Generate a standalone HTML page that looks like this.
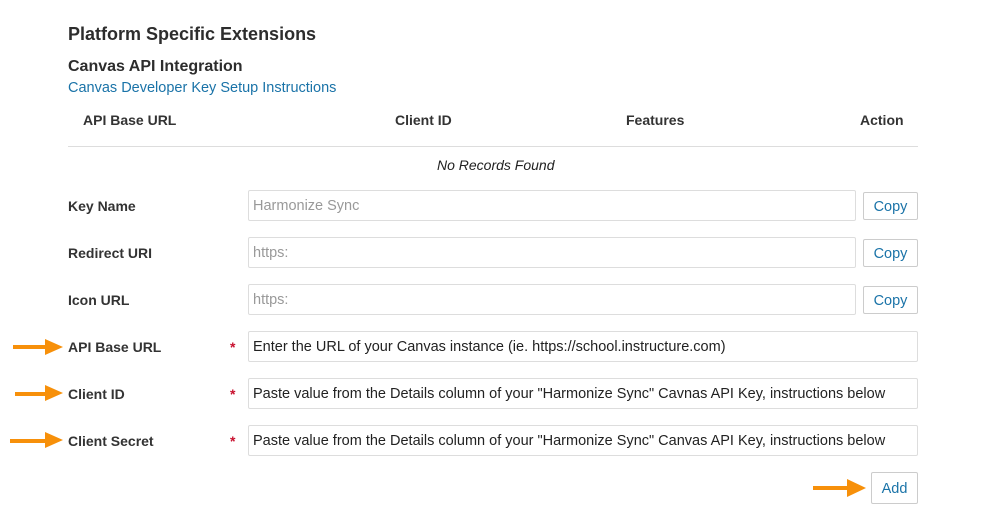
<!DOCTYPE html>
<html><head><style>
body{margin:0;width:993px;height:530px;background:#fff;font-family:"Liberation Sans",sans-serif;color:#222;position:relative;overflow:hidden}
.a{position:absolute;white-space:nowrap}
.lbl{font-size:14px;font-weight:bold;color:#333}
.inp{position:absolute;left:248px;border:1px solid #ddd;border-radius:2px;font-size:14.5px;line-height:31px;padding-left:4px;box-sizing:border-box;height:31px;white-space:nowrap;overflow:hidden}
.btn{position:absolute;border:1px solid #ccc;border-radius:2px;color:#1a73a8;font-size:14.5px;text-align:center;box-sizing:border-box}
.star{position:absolute;left:230px;color:#c8102e;font-size:14px;font-weight:bold}
</style></head><body>
<div class="a" style="left:68px;top:24px;font-size:18px;font-weight:bold;color:#2d2d2d">Platform Specific Extensions</div>
<div class="a" style="left:68px;top:58px;font-size:16px;font-weight:bold;color:#2d2d2d">Canvas API Integration</div>
<div class="a" style="left:68px;top:80px;font-size:14.5px;color:#1a73a8">Canvas Developer Key Setup Instructions</div>
<div class="a lbl" style="left:83px;top:112px">API Base URL</div>
<div class="a lbl" style="left:395px;top:112px">Client ID</div>
<div class="a lbl" style="left:626px;top:112px">Features</div>
<div class="a lbl" style="left:860px;top:112px">Action</div>
<div class="a" style="left:68px;top:146px;width:850px;height:1px;background:#ddd"></div>
<div class="a" style="left:437px;top:157px;font-size:14px;font-style:italic">No Records Found</div>

<div class="a lbl" style="left:68px;top:198px">Key Name</div>
<div class="inp" style="top:190px;width:608px;color:#999">Harmonize Sync</div>
<div class="btn" style="left:863px;top:192px;width:55px;height:28px;line-height:28px">Copy</div>
<div class="a lbl" style="left:68px;top:245px">Redirect URI</div>
<div class="inp" style="top:237px;width:608px;color:#999">https:</div>
<div class="btn" style="left:863px;top:239px;width:55px;height:28px;line-height:28px">Copy</div>
<div class="a lbl" style="left:68px;top:292px">Icon URL</div>
<div class="inp" style="top:284px;width:608px;color:#999">https:</div>
<div class="btn" style="left:863px;top:286px;width:55px;height:28px;line-height:28px">Copy</div>

<div class="a lbl" style="left:68px;top:339px">API Base URL</div>
<div class="star" style="top:339px">*</div>
<div class="inp" style="top:331px;width:670px;color:#222">Enter the URL of your Canvas instance (ie. https://school.instructure.com)</div>
<div class="a lbl" style="left:68px;top:386px">Client ID</div>
<div class="star" style="top:386px">*</div>
<div class="inp" style="top:378px;width:670px;color:#222">Paste value from the Details column of your "Harmonize Sync" Cavnas API Key, instructions below</div>
<div class="a lbl" style="left:68px;top:433px">Client Secret</div>
<div class="star" style="top:433px">*</div>
<div class="inp" style="top:425px;width:670px;color:#222">Paste value from the Details column of your "Harmonize Sync" Canvas API Key, instructions below</div>
<div class="btn" style="left:871px;top:472px;width:47px;height:32px;line-height:32px">Add</div>

<svg class="a" style="left:0;top:0" width="993" height="530">
<g fill="#f7900a">
<rect x="13" y="345" width="34" height="4"/><polygon points="45,339 63,347 45,355"/>
<rect x="15" y="392" width="32" height="4"/><polygon points="45,385 63,393 45,401"/>
<rect x="10" y="439" width="37" height="4"/><polygon points="45,432 63,440 45,448"/>
<rect x="813" y="486" width="36" height="4"/><polygon points="847,479 866,488 847,497"/>
</g></svg>
</body></html>
